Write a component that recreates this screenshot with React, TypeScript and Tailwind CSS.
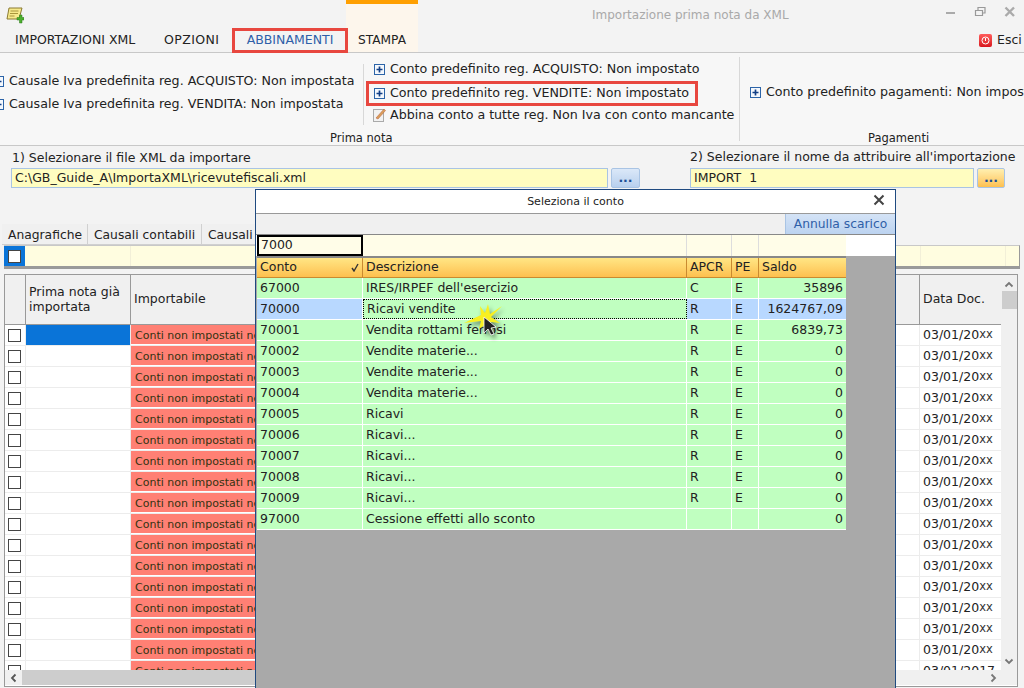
const F = "[font-family:'DejaVu_Sans',sans-serif]";

function PlusBox() {
  return (
    <svg width="11" height="11" viewBox="0 0 11 11" className="shrink-0">
      <rect x="0.5" y="0.5" width="10" height="10" fill="#f4f8fd" stroke="#2c64a8" />
      <path d="M5.5 2.500v6M2.500 5.500h6" stroke="#123f86" strokeWidth="1.700" />
    </svg>
  );
}

function Check() {
  return <div className="w-[13px] h-[13px] border border-[#444] bg-white" />;
}

const dialogRows = [
  ["67000", "IRES/IRPEF dell'esercizio", "C", "E", "35896"],
  ["70000", "Ricavi vendite", "R", "E", "1624767,09"],
  ["70001", "Vendita rottami ferrosi", "R", "E", "6839,73"],
  ["70002", "Vendite materie...", "R", "E", "0"],
  ["70003", "Vendite materie...", "R", "E", "0"],
  ["70004", "Vendita materie...", "R", "E", "0"],
  ["70005", "Ricavi", "R", "E", "0"],
  ["70006", "Ricavi...", "R", "E", "0"],
  ["70007", "Ricavi...", "R", "E", "0"],
  ["70008", "Ricavi...", "R", "E", "0"],
  ["70009", "Ricavi...", "R", "E", "0"],
  ["97000", "Cessione effetti allo sconto", "", "", "0"],
];

const rows = Array.from({ length: 17 }, (_, i) => i);

export default function App() {
  return (
    <div className={`relative w-[1024px] h-[688px] overflow-hidden bg-[#f3f3f3] text-[#222] text-[12.5px] leading-none ${F}`}>
      {/* STAMPA highlight */}
      <div className="absolute left-[346px] top-0 w-[72px] h-[52px] bg-[#fdf6ec] border-t-4 border-[#ff9f00]" />

      {/* Title bar */}
      <div className="relative flex h-[28px] items-center">
        <svg width="18" height="18" viewBox="0 0 18 18" className="ml-[6px] mt-[2px]">
          <path d="M3 2h13l-3 11H1z" fill="#f6e98c" stroke="#8a7a30" />
          <path d="M4.500 5h8M4 7.500h8M3.500 10h5" stroke="#a8953c" />
          <path d="M11 11.500h2.500V9h2.500v2.500h2V14h-2v3h-2.500v-3H11z" fill="#4caf2e" stroke="#2a7a18" strokeWidth="0.500" />
        </svg>
        <span className="absolute left-[592px] top-[9px] text-[#a9a9a9] text-[12px]">Importazione prima nota da XML</span>
        <svg width="72" height="14" viewBox="0 0 72 14" className="absolute left-[945px] top-[5px]">
          <path d="M1 8h9" stroke="#aaa" strokeWidth="2" />
          <path d="M30.500 5.500h7v5h-7zM33 5V2.500h7v5.500h-2.500" fill="none" stroke="#999" strokeWidth="1.200" />
          <path d="M60.500 2.500l8.500 8.500M69 2.500l-8.500 8.500" stroke="#aaa" strokeWidth="2.400" />
        </svg>
      </div>

      {/* Tabs */}
      <div className="relative flex h-[25px] items-center border-b border-[#c8c8c8]">
        <span className="absolute left-[15px] top-[6px]">IMPORTAZIONI XML</span>
        <span className="absolute left-[164px] top-[6px] tracking-[0.4px]">OPZIONI</span>
        <span className="absolute left-[232px] top-0 w-[116px] h-[25px] border-[3px] border-[#e8473f] flex items-center justify-center text-[#2f5fa8]">ABBINAMENTI</span>
        <span className="absolute left-[358px] top-[6px] text-[12.2px]">STAMPA</span>
        <span className="absolute left-[979px] top-[6px] w-[13px] h-[13px] rounded-[2px] bg-gradient-to-b from-[#ff5a5a] to-[#d8101c] flex items-center justify-center">
          <svg width="9" height="9" viewBox="0 0 9 9"><circle cx="4.500" cy="4.500" r="3.500" fill="none" stroke="#fff" /><path d="M4.500 2v3" stroke="#fff" /></svg>
        </span>
        <span className="absolute left-[997px] top-[6px]">Esci</span>
      </div>

      {/* Ribbon */}
      <div className="flex h-[93px] border-b border-[#c8c8c8] bg-[#f7f7f7] text-[12.65px]">
        <div className="relative w-[363px] shrink-0">
          <div className="absolute -left-[7px] top-[22px] flex items-center gap-[5px] whitespace-nowrap"><PlusBox /><span>Causale Iva predefinita reg. ACQUISTO: Non impostata</span></div>
          <div className="absolute -left-[7px] top-[45px] flex items-center gap-[5px] whitespace-nowrap"><PlusBox /><span>Causale Iva predefinita reg. VENDITA: Non impostata</span></div>
        </div>
        <div className="relative w-[376px] shrink-0 my-[4px]">
          <div className="absolute left-0 top-[7px] w-px h-[61px] bg-[#d8d8d8]" />
          <div className="absolute left-[11px] top-[6px] flex items-center gap-[5px] whitespace-nowrap"><PlusBox /><span>Conto predefinito reg. ACQUISTO: Non impostato</span></div>
          <div className="absolute left-[3px] top-[24px] w-[332px] h-[25px] border-[3px] border-[#e8473f] flex items-center pl-[5px] gap-[5px] whitespace-nowrap"><PlusBox /><span>Conto predefinito reg. VENDITE: Non impostato</span></div>
          <div className="absolute left-[10px] top-[51px] flex items-center gap-[4px] whitespace-nowrap">
            <svg width="13" height="14" viewBox="0 0 13 14"><rect x="0.500" y="1.500" width="10" height="12" fill="#f2f2f2" stroke="#aaa" /><path d="M3 10L11 1l1.500 1.500L5 11z" fill="#d9a05a" stroke="#b9563a" strokeWidth="0.500" /></svg>
            <span>Abbina conto a tutte reg. Non Iva con conto mancante</span>
          </div>
          <span className="absolute left-[-33px] top-[76px] text-[11.5px]">Prima nota</span>
        </div>
        <div className="relative flex-1 my-[4px] border-l border-[#d8d8d8]">
          <div className="absolute left-[10px] top-[29px] flex items-center gap-[5px] whitespace-nowrap"><PlusBox /><span>Conto predefinito pagamenti: Non impostato</span></div>
          <span className="absolute left-[128px] top-[76px] text-[11.5px]">Pagamenti</span>
        </div>
      </div>

      {/* File selection */}
      <div className="relative h-[78px]">
        <span className="absolute left-[12px] top-[6px]">1) Selezionare il file XML da importare</span>
        <div className="absolute left-[11px] top-[22px] w-[597px] h-[20px] bg-[#fffdc0] border border-[#a9c4e4] flex items-center pl-[3px]">C:\GB_Guide_A\ImportaXML\ricevutefiscali.xml</div>
        <div className="absolute left-[611px] top-[22px] w-[29px] h-[20px] rounded-[2px] border border-[#a9c4e4] bg-gradient-to-b from-[#dbe8f8] to-[#b8d0ee] flex items-center justify-center text-[#1d4f96] font-bold">...</div>
        <span className="absolute left-[690px] top-[5px] whitespace-nowrap">2) Selezionare il nome da attribuire all'importazione</span>
        <div className="absolute left-[690px] top-[22px] w-[284px] h-[20px] bg-[#fffdc0] border border-[#a9c4e4] flex items-center pl-[3px]">IMPORT&nbsp; 1</div>
        <div className="absolute left-[977px] top-[22px] w-[28px] h-[20px] rounded-[2px] border border-[#a9c4e4] bg-gradient-to-b from-[#fff0b0] to-[#fdc04e] flex items-center justify-center text-[#1d4f96] font-bold">...</div>
      </div>

      {/* Inner tabs */}
      <div className="flex h-[21px] ml-[2px] items-stretch text-[12.3px] whitespace-nowrap">
        <span className="w-[86px] pl-[6px] pt-[2px] flex items-center border-r border-b border-[#d0d0d0] bg-[#f0f0f0]">Anagrafiche</span>
        <span className="w-[114px] pl-[6px] pt-[2px] flex items-center border-r border-b border-[#d0d0d0] bg-[#f0f0f0]">Causali contabili</span>
        <span className="w-[60px] pl-[6px] pt-[2px] flex items-center border-b border-[#d0d0d0] bg-[#f0f0f0] overflow-hidden">Causali Iva</span>
      </div>

      {/* Filter row */}
      <div className="ml-[4px] mr-[4px] h-[24px] flex bg-[#fffde0] border-t border-[#c8c8c8] border-b-[3px] border-b-[#9a9a9a] border-r border-r-[#999]">
        <div className="w-[21px] bg-[#0a74d8] flex items-center justify-center"><Check /></div>
        <div className="flex-1 border-l border-[#f2efd8] ml-[105px]" />
        <div className="w-[85px] border-l border-[#f2efd8]" />
        <div className="w-[14px] border-l border-[#f2efd8]" />
      </div>

      {/* Table */}
      <div className="ml-[4px] mr-[6px] mt-[5px] h-[413px] border border-[#999] bg-white overflow-hidden relative">
        <div className="flex h-[50px] bg-[#f0f0f0] border-b border-[#999]">
          <div className="w-[21px] border-r border-[#999]" />
          <div className="w-[105px] border-r border-[#999] px-[3px] pb-[2px] flex items-center leading-[15px]">Prima nota già<br />importata</div>
          <div className="flex-1 flex items-center pl-[3px]">Importabile</div>
          <div className="w-[82px] border-l border-[#999] flex items-center pl-[3px]">Data Doc.</div>
          <div className="w-[16px] bg-[#f0f0f0] border-l border-[#e8e8e8]" />
        </div>
        {rows.map((i) => (
          <div key={i} className="flex h-[21px] border-b border-[#ececec]">
            <div className="w-[21px] border-r border-[#ececec] flex items-center pl-[3px]"><Check /></div>
            <div className={`w-[105px] border-r border-[#ececec] ${i === 0 ? "bg-[#0a74d8]" : ""}`} />
            <div className="w-[125px] bg-[#ff8074] border-b border-white flex items-center pl-[4px] pt-[2px] text-[11px] text-[#331] whitespace-nowrap overflow-hidden">Conti non impostati nei conti</div>
            <div className="flex-1" />
            <div className="w-[82px] border-l border-[#ececec] flex items-center pl-[3px] whitespace-nowrap">{i === 16 ? "03/01/2017" : <>03/01/20<span className="text-[#333] text-[11.5px]">xx</span></>}</div>
            <div className="w-[16px] bg-[#f0f0f0]" />
          </div>
        ))}
        <div className="absolute right-0 top-0 w-[16px] h-[395px] bg-[#f0f0f0] flex flex-col items-center pt-[6px] text-[#777]">
          <svg width="10" height="7" viewBox="0 0 10 7"><path d="M1.500 5.500L5 2l3.500 3.500" fill="none" stroke="#777" strokeWidth="1.800" /></svg>
          <div className="w-[15px] h-[18px] bg-[#cdcdcd] mt-[3px]" />
          <div className="flex-1" />
          <svg width="10" height="7" viewBox="0 0 10 7" className="mb-[5px]"><path d="M1.500 1.500L5 5l3.500-3.500" fill="none" stroke="#777" strokeWidth="1.800" /></svg>
        </div>
        <div className="absolute left-0 right-0 bottom-px h-[15px] bg-[#f0f0f0] flex items-center">
          <div className="w-[17px] flex justify-center"><svg width="7" height="10" viewBox="0 0 7 10"><path d="M5.500 1.500L2 5l3.500 3.500" fill="none" stroke="#555" strokeWidth="1.800" /></svg></div>
          <div className="w-[233px] h-[15px] bg-[#cdcdcd]" />
          <div className="flex-1" />
          <div className="w-[48px] flex justify-center"><svg width="7" height="10" viewBox="0 0 7 10"><path d="M1.500 1.500L5 5 1.500 8.500" fill="none" stroke="#777" strokeWidth="1.800" /></svg></div>
        </div>
      </div>

      {/* Dialog */}
      <div className="absolute left-[255px] top-[189px] w-[641px] h-[510px] border border-[#1f4a80] bg-[#a9a9a9] flex flex-col">
        <div className="relative h-[24px] bg-white border-b border-[#999] flex items-center justify-center text-[11px] shrink-0">
          Seleziona il conto
          <svg width="12" height="12" viewBox="0 0 12 12" className="absolute right-[10px] top-[4px]"><path d="M1.500 1.500l9 9M10.500 1.500l-9 9" stroke="#444" strokeWidth="2" /></svg>
        </div>
        <div className="flex h-[20px] bg-[#f0f0f0] justify-end shrink-0">
          <div className="w-[110px] bg-gradient-to-b from-[#d4e3f6] to-[#bcd3f0] border-l border-[#a9c4e4] flex items-center justify-center text-[#2f5fa8] text-[12.3px]">Annulla scarico</div>
        </div>
        <div className="flex h-[22px] bg-white border-t border-[#888] pl-px shrink-0">
          <div className="w-[106px] h-[21px] bg-[#fffde8] border-[2px] border-black flex items-center pl-[2px]">7000</div>
          <div className="w-[324px] bg-[#fffde8] border-r border-[#ddd]" />
          <div className="w-[45px] bg-[#fffde8] border-r border-[#ddd]" />
          <div className="w-[27px] bg-[#fffde8] border-r border-[#ddd]" />
          <div className="w-[87px] bg-[#fffde8]" />
        </div>
        <div className="w-[589px] ml-px">
          <div className="flex h-[22px] bg-gradient-to-b from-[#ffe684] to-[#fdc04e] border-b border-[#c98a30] border-t-2 border-t-[#888]">
            <div className="w-[106px] border-r border-[#c98a30] flex items-center justify-between pl-[3px] pr-[3px]">Conto<svg width="8" height="9" viewBox="0 0 8 9"><path d="M1 5l2 3 4-7" fill="none" stroke="#333" strokeWidth="1.400" /></svg></div>
            <div className="w-[324px] border-r border-[#c98a30] flex items-center pl-[3px]">Descrizione</div>
            <div className="w-[45px] border-r border-[#c98a30] flex items-center pl-[3px]">APCR</div>
            <div className="w-[27px] border-r border-[#c98a30] flex items-center pl-[3px]">PE</div>
            <div className="flex-1 flex items-center pl-[3px]">Saldo</div>
          </div>
          {dialogRows.map((r, i) => (
            <div key={r[0]} className={`flex h-[21px] border-b border-white ${i === 1 ? "bg-[#b8d8ff]" : "bg-[#c0ffc0]"}`}>
              <div className="w-[106px] border-r border-white flex items-center pl-[3px]">{r[0]}</div>
              <div className={`w-[324px] flex items-center pl-[3px] ${i === 1 ? "bg-[#c0ffc0] border border-dotted border-black" : "border-r border-white"}`}>{r[1]}</div>
              <div className="w-[45px] border-r border-white flex items-center pl-[3px]">{r[2]}</div>
              <div className="w-[27px] border-r border-white flex items-center pl-[3px]">{r[3]}</div>
              <div className="flex-1 flex items-center justify-end pr-[3px]">{r[4]}</div>
            </div>
          ))}
        </div>
      </div>

      {/* Cursor with spark */}
      <svg width="44" height="44" viewBox="0 0 44 44" className="absolute left-[462px] top-[300px] drop-shadow-[2px_3px_2px_rgba(0,0,0,0.45)]">
        <path d="M40 6L28 14 26 4l-3 9-5-7 1 9-17 8 17-2-2 8 7-5 6 7-1-9 9 1-9-6z" fill="#f8f020" />
        <path d="M22 17v16l4-4 3 6 3-1-3-6 5-1z" fill="#222" stroke="#fff" strokeWidth="0.800" />
      </svg>
    </div>
  );
}
